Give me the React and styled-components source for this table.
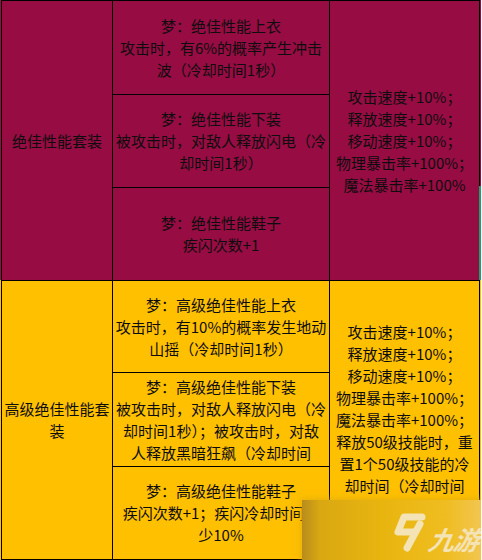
import React from 'react';
import styled, {createGlobalStyle} from 'styled-components';

const WINE = '#960c43';
const GOLD = '#ffc000';

const GlobalStyle = createGlobalStyle`
  html, body {
    margin: 0;
    padding: 0;
    background: #fff;
  }
  body {
    font-family: "Noto Sans CJK SC", "Noto Sans", sans-serif;
  }
`;

const sets = [
    {
        tone: 'wine',
        name: ['绝佳性能套装'],
        pieces: [
            ['梦：绝佳性能上衣', '攻击时，有6%的概率产生冲击', '波（冷却时间1秒）'],
            ['梦：绝佳性能下装', '被攻击时，对敌人释放闪电（冷', '却时间1秒）'],
            ['梦：绝佳性能鞋子', '疾闪次数+1'],
        ],
        bonus: ['攻击速度+10%；', '释放速度+10%；', '移动速度+10%；', '物理暴击率+100%；', '魔法暴击率+100%'],
    },
    {
        tone: 'gold',
        name: ['高级绝佳性能套', '装'],
        pieces: [
            ['梦：高级绝佳性能上衣', '攻击时，有10%的概率发生地动', '山摇（冷却时间1秒）'],
            ['梦：高级绝佳性能下装', '被攻击时，对敌人释放闪电（冷', '却时间1秒）；被攻击时，对敌', '人释放黑暗狂飙（冷却时间'],
            ['梦：高级绝佳性能鞋子', '疾闪次数+1；疾闪冷却时间减', '少10%'],
        ],
        bonus: [
            '攻击速度+10%；', '释放速度+10%；', '移动速度+10%；', '物理暴击率+100%；',
            '魔法暴击率+100%；', '释放50级技能时，重', '置1个50级技能的冷', '却时间（冷却时间', '1秒）',
        ],
    },
];

const App = () => {
    const renderLines = (lines) => lines.map((line, i) => <Line key={i}>{line}</Line>);

    return (
        <>
            <GlobalStyle/>
            <Page>
                <Table>
                    {sets.map((set, index) => (
                        <React.Fragment key={index}>
                            <Cell tone={set.tone} $span={3}>{renderLines(set.name)}</Cell>
                            <Cell tone={set.tone}>{renderLines(set.pieces[0])}</Cell>
                            <Cell tone={set.tone} $span={3}>{renderLines(set.bonus)}</Cell>
                            <Cell tone={set.tone}>{renderLines(set.pieces[1])}</Cell>
                            <Cell tone={set.tone}>{renderLines(set.pieces[2])}</Cell>
                        </React.Fragment>
                    ))}
                </Table>
                <EdgeMark/>
                <Watermark>
                    <Logo viewBox="0 0 36 42">
                        <path
                            d="M31 6 L13 6 L7 21 L23 21"
                            fill="none"
                            stroke="#f4e3b4"
                            strokeWidth="7"
                            strokeLinejoin="round"
                            strokeLinecap="round"
                        />
                        <path
                            d="M29 13 L16 37"
                            fill="none"
                            stroke="#f4e3b4"
                            strokeWidth="7"
                            strokeLinecap="round"
                        />
                    </Logo>
                    <Brand>九游</Brand>
                </Watermark>
            </Page>
        </>
    );
};

const Page = styled.div`
  position: relative;
  width: 481px;
  height: 560px;
  padding-left: 1px;
  box-sizing: border-box;
  background: linear-gradient(to bottom, ${WINE} 0, ${WINE} 280px, ${GOLD} 280px);
  overflow: hidden;
`;

const Table = styled.div`
  display: grid;
  grid-template-columns: 110px 216px 149px;
  grid-template-rows: 93px 92px 92px 91px 93px 92px;
  gap: 1px;
  padding: 1px;
  width: max-content;
  background: #000;
`;

const Cell = styled.div`
  grid-row: span ${({$span}) => $span || 1};
  display: flex;
  flex-direction: column;
  align-items: center;
  justify-content: center;
  overflow: hidden;
  padding: 0 2px;
  background: ${({tone}) => (tone === 'gold' ? GOLD : WINE)};
  color: #0d0d0d;
  font-size: 15px;
  line-height: 22px;
  text-align: center;
`;

const Line = styled.span`
  display: block;
  white-space: nowrap;
`;

const EdgeMark = styled.div`
  position: absolute;
  left: 479px;
  top: 186px;
  width: 2px;
  height: 94px;
  background: #1f9e6e;
`;

const Watermark = styled.div`
  position: absolute;
  left: 302px;
  top: 500px;
  right: 0;
  bottom: 0;
  display: flex;
  align-items: flex-end;
  gap: 2px;
  padding: 0 0 7px 89px;
  background: linear-gradient(to right, #b88c1c 0%, #d9a812 10%, #e8b50f 45%, #efbd20 80%, #f2c550 100%);
  box-shadow: 0 0 6px 2px rgba(220, 170, 20, 0.6);
`;

const Logo = styled.svg`
  width: 36px;
  height: 42px;
  flex: none;
`;

const Brand = styled.span`
  font-family: "Noto Sans CJK SC", sans-serif;
  font-size: 26px;
  font-weight: 700;
  font-style: italic;
  line-height: 28px;
  color: #f4e3b4;
  letter-spacing: -1px;
  transform: skewX(-10deg);
`;

export default App;
